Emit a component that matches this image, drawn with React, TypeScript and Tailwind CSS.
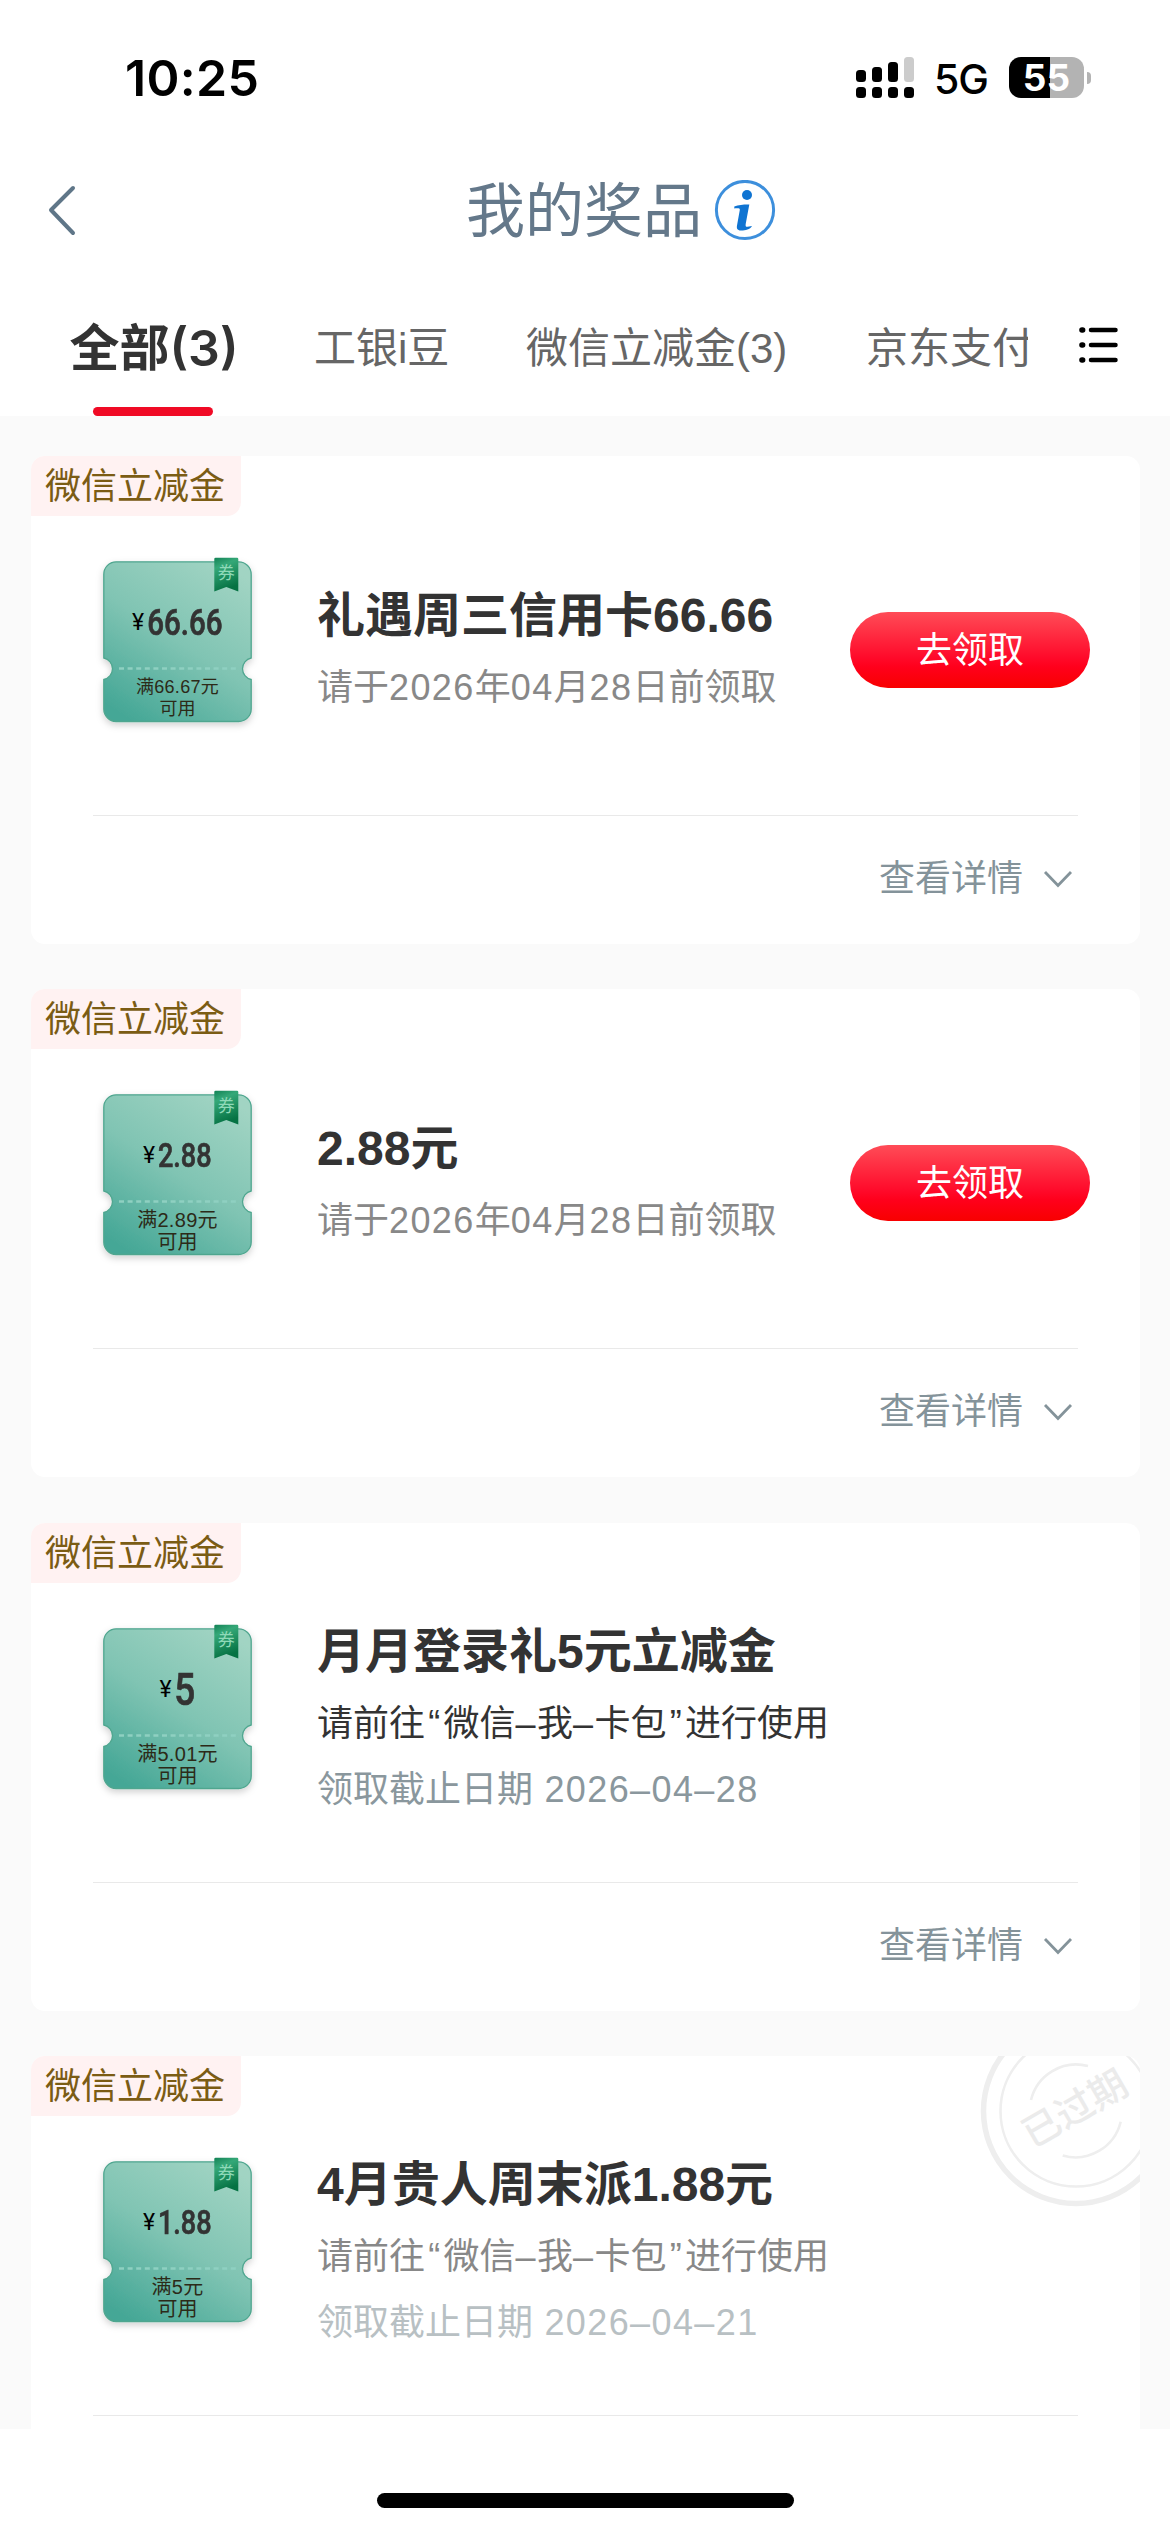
import React from "react";

type Prize = {
  title: string;
  lines: { text: string; color: string }[];
  amount: string;
  amountClass: string;
  amountBox: string;
  condition: string;
  conditionClass: string;
  claimable?: boolean;
  expired?: boolean;
};

const prizes: Prize[] = [
  {
    title: "礼遇周三信用卡66.66",
    lines: [{ text: "请于2026年04月28日前领取", color: "text-[#888888]" }],
    amount: "66.66",
    amountClass: "text-[36px]",
    amountBox: "w-[76px]",
    condition: "满66.67元",
    conditionClass: "text-[18px]",
    claimable: true,
  },
  {
    title: "2.88元",
    lines: [{ text: "请于2026年04月28日前领取", color: "text-[#888888]" }],
    amount: "2.88",
    amountClass: "text-[33px]",
    amountBox: "w-[54px]",
    condition: "满2.89元",
    conditionClass: "text-[20px]",
    claimable: true,
  },
  {
    title: "月月登录礼5元立减金",
    lines: [
      { text: "请前往“微信–我–卡包”进行使用", color: "text-[#333333]" },
      { text: "领取截止日期 2026–04–28", color: "text-[#8a979d]" },
    ],
    amount: "5",
    amountClass: "text-[45px]",
    amountBox: "w-[21px]",
    condition: "满5.01元",
    conditionClass: "text-[20px]",
  },
  {
    title: "4月贵人周末派1.88元",
    lines: [
      { text: "请前往“微信–我–卡包”进行使用", color: "text-[#888888]" },
      { text: "领取截止日期 2026–04–21", color: "text-[#b8c0c3]" },
    ],
    amount: "1.88",
    amountClass: "text-[33px]",
    amountBox: "w-[54px]",
    condition: "满5元",
    conditionClass: "text-[20px]",
    expired: true,
  },
];

// Latin runs and curly quotes get their own spacing inside Chinese text.
function MixedText({ text }: { text: string }) {
  return (
    <>
      {text.split(/([ 0-9–]+|[“”])/).map((part, i) => {
        if (part === "“" || part === "”") {
          return (
            <span key={i} className="inline-block w-[18.500px] text-center font-['Liberation_Sans']">
              {part}
            </span>
          );
        }
        if (/^[ 0-9–]+$/.test(part)) {
          return (
            <span key={i} className="font-['Liberation_Sans'] tracking-[1.400px]">
              {part}
            </span>
          );
        }
        return <React.Fragment key={i}>{part}</React.Fragment>;
      })}
    </>
  );
}

function StatusBar() {
  return (
    <div className="flex h-[140px] items-start justify-between pl-[125px] pr-[79px] pt-[57px]">
      <span className="font-['Inter'] text-[50px] font-semibold leading-[42px] tracking-[0.300px] text-black">10:25</span>
      <div className="flex h-[41px] items-center">
        <svg width="58" height="41" viewBox="0 0 58 41">
          <rect x="0" y="13" width="10" height="12" rx="3.5" />
          <rect x="16" y="10" width="10" height="15" rx="3.5" />
          <rect x="32" y="5" width="10" height="20" rx="3.5" />
          <rect x="48" y="0" width="10" height="25" rx="3.5" fill="#cccccc" />
          <rect x="0" y="30" width="10" height="11" rx="3.5" />
          <rect x="16" y="30" width="10" height="11" rx="3.5" />
          <rect x="32" y="30" width="10" height="11" rx="3.5" />
          <rect x="48" y="30" width="10" height="11" rx="3.5" />
        </svg>
        <span className="ml-[20px] w-[56px] pt-[4px] font-['Inter'] text-[41px] font-medium leading-[41px] tracking-[-1px] text-black">5G</span>
        <div className="ml-[19px] flex h-[41px] w-[75px] items-center justify-center rounded-[12px] bg-[linear-gradient(90deg,#000_55%,#b3b3b3_55%)]">
          <span className="font-['Inter'] text-[37px] font-bold leading-[41px] text-white">55</span>
        </div>
        <div className="ml-[3px] h-[12px] w-[4px] rounded-r-[4px] bg-[#b3b3b3]" />
      </div>
    </div>
  );
}

function NavBar() {
  return (
    <div className="flex h-[142px] items-center">
      <svg className="ml-[46px]" width="32" height="52" viewBox="0 0 32 52" fill="none" stroke="#5f7688" strokeWidth="4" strokeLinecap="round" strokeLinejoin="round">
        <path d="M27 3 L5 25 L27 48" />
      </svg>
      <h1 className="ml-[388px] text-[59px] font-normal leading-[70px] text-[#64788a]">我的奖品</h1>
      <svg className="ml-[12px]" width="62" height="62" viewBox="0 0 62 62">
        <circle cx="31" cy="30" r="28.6" fill="none" stroke="#3d8fdc" strokeWidth="3" />
        <circle cx="33" cy="15" r="5" fill="#0f74d2" />
        <path d="M20.300 26.500 C25 24.800 31 24.300 35.300 24.500 L31.700 44 C31.300 46.300 32 47 33.500 46.800 L38 46 C36 49.500 31 50.700 27 50.600 C23 50.400 22.500 48 23 45.500 L25.800 30 C26 28.500 25.300 28.200 20.300 28.400 Z" fill="#0f74d2" />
      </svg>
    </div>
  );
}

function Tabs() {
  return (
    <div className="flex h-[134px] items-start">
      <div className="flex w-[1028px] overflow-hidden whitespace-nowrap pl-[68px] font-['Liberation_Sans','Noto_Sans_CJK_SC',sans-serif] text-[#666666]">
        <div className="flex h-[134px] w-[170px] shrink-0 flex-col items-center justify-between pt-[31px]">
          <span className="pl-[2px] font-['Inter','Noto_Sans_CJK_SC',sans-serif] text-[50px] font-semibold leading-[70px] text-[#333333]">全部(3)</span>
          <div className="h-[9px] w-[120px] rounded-full bg-[#f00a25]" />
        </div>
        <span className="ml-[76px] w-[135px] shrink-0 pt-[32px] text-[42px] leading-[70px]">工银i豆</span>
        <span className="ml-[77px] w-[264px] shrink-0 pt-[32px] text-[42px] leading-[70px]">微信立减金(3)</span>
        <span className="ml-[76px] shrink-0 pt-[32px] text-[42px] leading-[70px]">京东支付</span>
      </div>
      <svg className="ml-[50px] mt-[44px]" width="42" height="38" viewBox="0 0 42 38" stroke="#000" strokeWidth="4.500" strokeLinecap="round">
        <path d="M13 4 H37.500 M13 19 H37.500 M13 34 H37.500" />
        <path d="M4 4 h.6 M4 19 h.6 M4 34 h.6" strokeWidth="5.600" />
      </svg>
    </div>
  );
}

function Ticket({ prize, id }: { prize: Prize; id: string }) {
  return (
    <div className="relative ml-[72px] mt-[45px] h-[161px] w-[149px] shrink-0">
      <svg className="absolute -left-[10px] -top-[10px]" width="170" height="192" viewBox="-10 -10 170 192">
        <defs>
          <linearGradient id={`t${id}`} x1="0.8" y1="0" x2="0.2" y2="1">
            <stop offset="0" stopColor="#a1d4c3" />
            <stop offset="0.5" stopColor="#80c4b3" />
            <stop offset="1" stopColor="#45a796" />
          </linearGradient>
          <linearGradient id={`r${id}`} x1="0" y1="0" x2="0.3" y2="1">
            <stop offset="0" stopColor="#128255" />
            <stop offset="0.3" stopColor="#35a878" />
            <stop offset="1" stopColor="#057243" />
          </linearGradient>
          <filter id={`s${id}`} x="-10%" y="-10%" width="120%" height="125%">
            <feDropShadow dx="0" dy="3" stdDeviation="3.500" floodColor="#000" floodOpacity="0.18" />
          </filter>
        </defs>
        <path
          d="M13 .8 H135.500 A12.500 12.500 0 0 1 148.200 13.500 V97 A11 11 0 0 0 148.200 118.500 V148 A12.500 12.500 0 0 1 135.500 160.500 H13 A12.500 12.500 0 0 1 .8 148 V118.500 A11 11 0 0 0 .8 97 V13.500 A12.500 12.500 0 0 1 13 .8 Z"
          fill={`url(#t${id})`}
          stroke="#4fa68f"
          strokeWidth="1.300"
          filter={`url(#s${id})`}
        />
        <path d="M16 107.500 H134" stroke="#8fd0c1" strokeWidth="2.500" strokeDasharray="5 3.600" />
        <path d="M111.300 -2 Q111.300 -3.300 112.600 -3.300 H134 Q135.300 -3.300 135.300 -2 V30.500 L123.300 26 L111.300 30.500 Z" fill={`url(#r${id})`} />
        <text x="123.300" y="18" fontSize="17" textAnchor="middle" fill="#8fd9b8">券</text>
      </svg>
      <div className="absolute inset-x-0 top-[41px] flex h-[42px] items-center justify-center">
        <span className="mr-[3px] flex w-[11px] justify-center font-['Roboto'] text-[23px] leading-[42px] text-black">¥</span>
        <span className={`flex justify-center ${prize.amountBox}`}>
          <span className={`inline-block scale-x-[0.82] font-['Roboto'] font-medium leading-[42px] text-[#333333] [-webkit-text-stroke:0.700px_#333333] ${prize.amountClass}`}>
            {prize.amount}
          </span>
        </span>
      </div>
      <div className={`relative pt-[115px] text-center font-['Liberation_Sans','Noto_Sans_CJK_SC',sans-serif] text-[#2c2a18] ${prize.conditionClass}`}>
        <p className="leading-[22px] tracking-[0.300px]">{prize.condition}</p>
        <p className="leading-[22px]">可用</p>
      </div>
    </div>
  );
}

function ExpiredStamp() {
  return (
    <svg className="absolute right-0 top-0" width="162" height="152" viewBox="0 0 162 152" fill="none" stroke="#eeeeee">
      <circle cx="98" cy="55" r="92.500" strokeWidth="5.500" />
      <circle cx="98" cy="55" r="75.500" strokeWidth="2.600" />
      <path d="M53 44 A46.500 46.500 0 0 1 110 10" strokeWidth="2.600" />
      <path d="M142.700 65.700 A46.500 46.500 0 0 1 84.700 99.500" strokeWidth="2.600" />
      <text x="97" y="66" fontSize="38" fontWeight="500" textAnchor="middle" fill="#ebebeb" stroke="none" transform="rotate(-30 97 53)">已过期</text>
    </svg>
  );
}

function PrizeCard({ prize, id }: { prize: Prize; id: string }) {
  return (
    <section className="relative flex h-[488px] shrink-0 flex-col overflow-hidden rounded-[14px] bg-white">
      {prize.expired && <ExpiredStamp />}
      <div className="flex h-[60px] w-[210px] items-center rounded-br-[14px] bg-[#fff2f2] pl-[14px] text-[36px] leading-[60px] text-[#7b5c14]">微信立减金</div>
      <div className="flex h-[299px] items-start">
        <Ticket prize={prize} id={id} />
        <div className={`ml-[65px] flex flex-1 flex-col gap-[16px] whitespace-nowrap ${prize.claimable ? "pt-[70px]" : "pt-[39px]"}`}>
          <h2 className="font-['Liberation_Sans','Noto_Sans_CJK_SC',sans-serif] text-[48px] font-bold leading-[60px] text-[#333333]">{prize.title}</h2>
          {prize.lines.map((l) => (
            <p key={l.text} className={`h-[50px] text-[36px] leading-[50px] ${l.color}`}>
              <MixedText text={l.text} />
            </p>
          ))}
        </div>
        {prize.claimable && (
          <button className="mr-[50px] mt-[96px] h-[76px] w-[240px] shrink-0 rounded-full bg-[linear-gradient(180deg,#ff4c57_0%,#ff0a2a_60%,#ff001c_72%,#f80000_100%)] text-[36px] font-normal leading-[74px] text-white">去领取</button>
        )}
      </div>
      <div className="mx-[62px] h-px shrink-0 bg-[#e9e9e9]" />
      <div className="flex h-[124px] items-center justify-end pr-[67px] text-[36px] leading-[50px] text-[#84939a]">
        <span>查看详情</span>
        <svg className="ml-[20px] mt-[2px]" width="30" height="20" viewBox="0 0 30 20" fill="none" stroke="#84939a" strokeWidth="2.800">
          <path d="M2 3 L15 16.500 L28 3" />
        </svg>
      </div>
    </section>
  );
}

export default function App() {
  return (
    <div className="flex h-[2532px] w-[1170px] flex-col overflow-hidden bg-white font-['Inter','Noto_Sans_CJK_SC',sans-serif]">
      <StatusBar />
      <NavBar />
      <Tabs />
      <main className="flex h-[2013px] shrink-0 flex-col gap-[45.330px] overflow-hidden bg-[#fafafa] pl-[31px] pr-[30px] pt-[40px]">
        {prizes.map((p, i) => (
          <PrizeCard key={p.title} prize={p} id={String(i)} />
        ))}
      </main>
      <div className="flex flex-1 justify-center pt-[64px]">
        <div className="h-[15px] w-[417px] rounded-full bg-black" />
      </div>
    </div>
  );
}
